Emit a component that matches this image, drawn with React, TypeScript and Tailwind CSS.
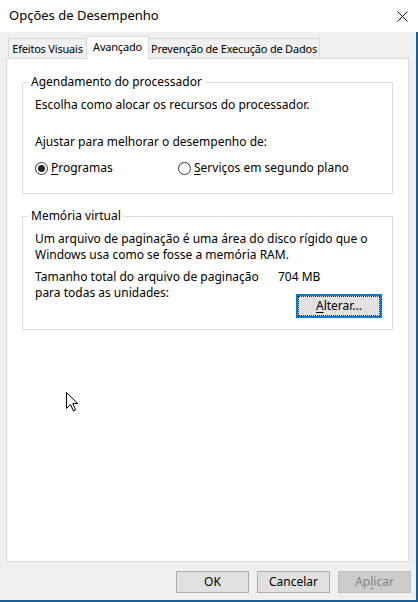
import React from 'react'

const Radio = ({ checked }: { checked?: boolean }) => (
  <span className="w-[13px] h-[13px] rounded-full border border-[#333] bg-white flex items-center justify-center shrink-0">
    {checked && <span className="w-[7px] h-[7px] rounded-full bg-[#222]" />}
  </span>
)

const Group = ({ title, className, children }: { title: string; className?: string; children: React.ReactNode }) => (
  <fieldset className={`border border-[#dcdcdc] ${className ?? ''}`}>
    <legend className="ml-[5px] px-[3px] leading-[16px]">{title}</legend>
    {children}
  </fieldset>
)

export default function App() {
  return (
    <div className="relative w-[418px] h-[602px] flex flex-col bg-[#f0f0f0] text-black text-[12px] font-['Noto_Sans',sans-serif] overflow-hidden">
      {/* Title bar */}
      <div className="h-[32px] bg-white flex items-center justify-between pl-[9px] pr-[10px] shrink-0">
        <span className="text-[13px]">Opções de Desempenho</span>
        <svg width="11" height="11" viewBox="0 0 11 11">
          <path d="M0.5 0.5 L10.5 10.5 M10.5 0.5 L0.5 10.5" stroke="#111" strokeWidth="1" />
        </svg>
      </div>

      {/* Body */}
      <div className="flex-1 flex flex-col pl-[6px] pr-[7px] border-r-2 border-b-2 border-[#1f5f94]">
        {/* Tabs */}
        <div className="mt-[4px] h-[23px] -mb-px flex items-end pl-[2px] relative z-10 whitespace-nowrap text-[11px] tracking-[-0.2px]">
          <div className="w-[79px] h-[20px] mb-px border border-b-0 border-[#d9d9d9] bg-[#f0f0f0] flex items-center justify-center leading-none">
            Efeitos Visuais
          </div>
          <div className="w-[63px] h-[23px] border border-b-0 border-[#d9d9d9] bg-white flex items-start justify-center pt-[4px] leading-none -ml-px">
            Avançado
          </div>
          <div className="w-[172px] h-[20px] mb-px border border-b-0 border-[#d9d9d9] bg-[#f0f0f0] flex items-center justify-center leading-none -ml-px">
            Prevenção de Execução de Dados
          </div>
        </div>

        {/* Panel */}
        <div className="h-[504px] bg-white border border-[#d9d9d9] pt-[15px] px-[15px] flex flex-col">
          <Group title="Agendamento do processador" className="pb-[17px]">
            <div className="pl-[12px] leading-[16px] pt-[7px]">
              <div>Escolha como alocar os recursos do processador.</div>
              <div className="mt-[21px]">Ajustar para melhorar o desempenho de:</div>
              <div className="mt-[10px] flex items-center h-[16px]">
                <div className="w-[143px] flex items-center gap-[3px]">
                  <Radio checked />
                  <span><span className="underline underline-offset-2">P</span>rogramas</span>
                </div>
                <div className="flex items-center gap-[3px]">
                  <Radio />
                  <span><span className="underline underline-offset-2">S</span>erviços em segundo plano</span>
                </div>
              </div>
            </div>
          </Group>

          <Group title="Memória virtual" className="mt-[14px] pb-[11px]">
            <div className="pl-[12px] leading-[16px] pt-[7px]">
              <div>Um arquivo de paginação é uma área do disco rígido que o</div>
              <div>Windows usa como se fosse a memória RAM.</div>
              <div className="mt-[6px] flex">
                <div className="w-[243px]">
                  <div>Tamanho total do arquivo de paginação</div>
                  <div>para todas as unidades:</div>
                </div>
                <div className="flex flex-col">
                  <div>704 MB</div>
                  <button className="mt-[9px] ml-[18px] w-[86px] h-[24px] border border-[#0078d7] bg-[#e1e1e1] p-[1px] shadow-[inset_0_0_0_1px_#0078d7]">
                    <span className="flex h-full w-full items-center justify-center border border-dotted border-[#222]">
                      <span><span className="underline underline-offset-2">A</span>lterar...</span>
                    </span>
                  </button>
                </div>
              </div>
            </div>
          </Group>
        </div>

        {/* Footer buttons */}
        <div className="flex justify-end gap-[8px] pt-[9px] -mr-[2px]">
          <button className="w-[73px] h-[22px] border border-[#adadad] bg-[#e1e1e1]">OK</button>
          <button className="w-[73px] h-[22px] border border-[#adadad] bg-[#e1e1e1]">Cancelar</button>
          <button className="w-[73px] h-[22px] border border-[#bfbfbf] bg-[#cccccc] text-[#838383]">
            Ap<span className="underline underline-offset-2">l</span>icar
          </button>
        </div>
      </div>

      {/* Mouse cursor */}
      <svg className="absolute left-[66px] top-[392px]" width="13" height="20" viewBox="0 0 13 20">
        <path d="M0.5 0.5 L0.5 16.5 L4.5 12.5 L7.5 19 L9.5 18 L6.8 11.5 L11.8 11.5 Z" fill="#fff" stroke="#000" strokeWidth="1" strokeLinejoin="miter" />
      </svg>
    </div>
  )
}
